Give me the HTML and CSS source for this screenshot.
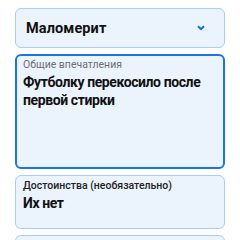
FILE: index.html
```html
<!DOCTYPE html>
<html lang="ru">
<head>
    <meta charset="UTF-8">
    <meta name="viewport" content="width=device-width, initial-scale=1.0">
    <title>Отзыв</title>
    <link rel="stylesheet" href="styles.css">
</head>
<body>
    <div class="form">
        <div class="field select">
            <span class="select-value">Маломерит</span>
            <svg class="chevron" width="8" height="6" viewBox="0 0 8 6">
                <path d="M1 1.2 L4 4.2 L7 1.2" fill="none" stroke="#1a6ed8" stroke-width="2"/>
            </svg>
        </div>
        <div class="field area focused">
            <div class="field-label muted">Общие впечатления</div>
            <div class="field-text">Футболку перекосило после первой стирки</div>
        </div>
        <div class="field area short">
            <div class="field-label">Достоинства (необязательно)</div>
            <div class="field-text">Их нет</div>
        </div>
        <div class="field area short"></div>
    </div>
</body>
</html>
```

FILE: styles.css
```css
body {
    margin: 0;
    padding: 8px 15px;
    background-color: #fff;
    font-family: Roboto, "Noto Sans", sans-serif;
    color: #111;
}
.form {
    display: flex;
    flex-direction: column;
    gap: 6px;
}
.field {
    background-color: #ebf3fd;
    border: 1px solid #a9cdf6;
    border-radius: 6px;
    box-sizing: border-box;
}
.select {
    height: 40px;
    display: flex;
    align-items: center;
    justify-content: space-between;
    padding: 0 19px 0 10px;
}
.select-value {
    font-size: 14.5px;
    font-weight: 700;
    letter-spacing: 0.1px;
}
.chevron {
    display: block;
}
.area {
    padding: 3px 7px;
}
.focused {
    height: 115px;
    border: 2px solid #1b74e4;
    padding: 2px 6px;
}
.short {
    height: 54px;
}
.field-label {
    font-size: 10.5px;
    line-height: 13px;
    font-weight: 500;
    color: #222;
}
.field-label.muted {
    color: #6b6f75;
    font-weight: 400;
}
.field-text {
    font-size: 14px;
    line-height: 18px;
    font-weight: 700;
    letter-spacing: -0.4px;
    margin-top: 2px;
}
```
